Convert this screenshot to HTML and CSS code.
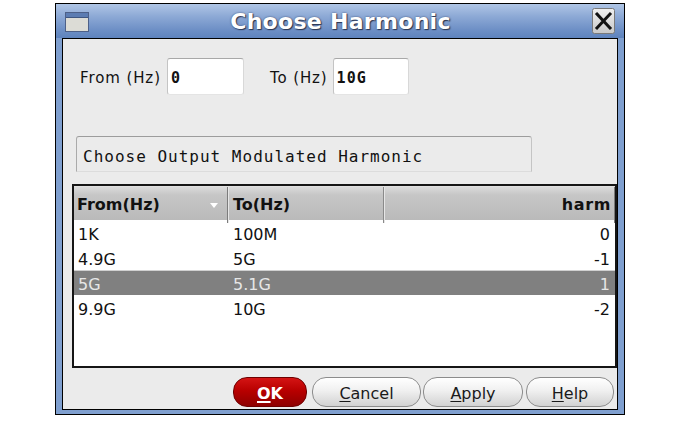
FILE: index.html
```html
<!DOCTYPE html>
<html>
<head>
<meta charset="utf-8">
<link rel="stylesheet" href="styles.css">
</head>
<body>
<div class="screen">
  <div class="window">
    <div class="titlebar">
      <span class="win-icon">
        <svg width="24" height="20" viewBox="0 0 24 20">
          <rect x="0.5" y="0.5" width="23" height="19" fill="#dcdcd6" stroke="#4d6088"/>
          <rect x="1" y="1" width="22" height="4" fill="#5c7cb2"/>
          <line x1="1" y1="5.5" x2="23" y2="5.5" stroke="#3f5680"/>
        </svg>
      </span>
      <span class="title">Choose Harmonic</span>
      <span class="close">
        <svg width="23" height="26" viewBox="0 0 23 26">
          <defs>
            <linearGradient id="cg" x1="0" y1="0" x2="0" y2="1">
              <stop offset="0" stop-color="#f0f0f0"/>
              <stop offset="1" stop-color="#c8c8c8"/>
            </linearGradient>
          </defs>
          <rect x="0.5" y="0.5" width="22" height="25" rx="2" fill="url(#cg)" stroke="#7a7a7a"/>
          <path d="M5 6 L18 20 M18 6 L5 20" stroke="#111" stroke-width="3" stroke-linecap="square"/>
        </svg>
      </span>
    </div>
    <div class="client">
      <div class="fields">
        <span class="lbl">From (Hz)</span>
        <div class="input in-from">0</div>
        <span class="lbl lbl-to">To (Hz)</span>
        <div class="input in-to">10G</div>
      </div>
      <div class="message">Choose Output Modulated Harmonic</div>
      <div class="table">
        <div class="row head">
          <div class="cell c1">From(Hz)<span class="sort"></span></div>
          <div class="cell c2">To(Hz)</div>
          <div class="cell c3">harm</div>
        </div>
        <div class="row">
          <div class="cell c1">1K</div>
          <div class="cell c2">100M</div>
          <div class="cell c3">0</div>
        </div>
        <div class="row">
          <div class="cell c1">4.9G</div>
          <div class="cell c2">5G</div>
          <div class="cell c3">-1</div>
        </div>
        <div class="row selected">
          <div class="cell c1">5G</div>
          <div class="cell c2">5.1G</div>
          <div class="cell c3">1</div>
        </div>
        <div class="row">
          <div class="cell c1">9.9G</div>
          <div class="cell c2">10G</div>
          <div class="cell c3">-2</div>
        </div>
      </div>
      <div class="buttons">
        <button class="btn btn-ok"><u>O</u>K</button>
        <button class="btn btn-cancel"><u>C</u>ancel</button>
        <button class="btn btn-apply"><u>A</u>pply</button>
        <button class="btn btn-help"><u>H</u>elp</button>
      </div>
    </div>
  </div>
</div>
</body>
</html>
```
FILE: styles.css
```css
html, body {
  margin: 0;
  padding: 0;
  background: #ffffff;
}

.screen {
  width: 683px;
  height: 422px;
  padding: 3px 0 0 55px;
  box-sizing: border-box;
  font-family: "DejaVu Sans", sans-serif;
}

.window {
  width: 570px;
  height: 412px;
  box-sizing: border-box;
  border: 1px solid #000;
  background: #7f9fcf;
  padding: 0 6px 4px 6px;
  display: flex;
  flex-direction: column;
}

.titlebar {
  height: 34px;
  margin: 0 -6px;
  padding: 0 9px;
  display: flex;
  align-items: center;
  background: linear-gradient(to bottom, #b0c6e6 0%, #8eaad6 35%, #6e90c6 75%, #5e83bd 100%);
}

.win-icon {
  width: 24px;
  height: 20px;
  display: flex;
  margin-top: 2px;
}

.title {
  flex: 1;
  text-align: center;
  color: #ffffff;
  font-weight: bold;
  font-size: 22px;
  letter-spacing: 0.3px;
  text-shadow: 1px 1px 1px #2a3550, 0 0 2px #3a4a70;
  padding-top: 1px;
}

.close {
  width: 23px;
  height: 26px;
  display: flex;
}

.client {
  flex: 1;
  border: 1px solid #000;
  background: #ebebeb;
  display: flex;
  flex-direction: column;
  padding-top: 19px;
}

.fields {
  display: flex;
  align-items: center;
  height: 37px;
  padding-left: 17px;
}

.lbl {
  font-size: 15px;
  letter-spacing: 0.9px;
  color: #111;
  margin-top: 2px;
}

.lbl-to {
  margin-left: 26px;
}

.input {
  height: 37px;
  box-sizing: border-box;
  background: #fff;
  border-top: 1px solid #a8a8a8;
  border-left: 1px solid #c4c4c4;
  border-right: 1px solid #d8d8d8;
  border-bottom: 1px solid #e4e4e4;
  border-radius: 3px;
  font-family: "DejaVu Sans Mono", monospace;
  font-weight: bold;
  font-size: 15px;
  letter-spacing: 1px;
  color: #111;
  padding: 10px 0 0 3px;
}

.in-from {
  width: 77px;
  margin-left: 6px;
}

.in-to {
  width: 76px;
  margin-left: 5px;
}

.message {
  margin: 41px 0 0 13px;
  width: 456px;
  height: 36px;
  box-sizing: border-box;
  border-top: 1px solid #9c9c9c;
  border-left: 1px solid #aaaaaa;
  border-right: 1px solid #c4c4c4;
  border-bottom: 1px solid #dcdcdc;
  border-radius: 3px 3px 0 0;
  font-family: "DejaVu Sans Mono", monospace;
  font-size: 16px;
  letter-spacing: 1px;
  color: #111;
  padding: 10px 0 0 6px;
  white-space: nowrap;
}

.table {
  margin: 12px 0 0 9px;
  height: 184px;
  box-sizing: border-box;
  border: 2px solid #151515;
  background: #fff;
  display: flex;
  flex-direction: column;
}

.row {
  display: grid;
  grid-template-columns: 154px 156px 1fr;
  height: 25px;
  font-size: 16px;
  color: #111;
}

.row .cell {
  line-height: 29px;
  white-space: nowrap;
}

.row .c1 {
  padding-left: 4px;
}

.row .c2 {
  padding-left: 5px;
}

.row .c3 {
  text-align: right;
  padding-right: 5px;
}

.row.head {
  height: 34px;
  background: linear-gradient(to bottom, #dadada 0%, #c6c6c6 25%, #bababa 100%);
  font-weight: bold;
  border-top: 1px solid #e0e0e0;
  box-sizing: border-box;
}

.row.head .cell {
  line-height: 36px;
  position: relative;
}

.row.head .c1 {
  padding-left: 3px;
  border-right: 1px solid #7c7c7c;
}

.row.head .c2 {
  border-left: 1px solid #e6e6e6;
  padding-left: 4px;
  border-right: 1px solid #8a8a8a;
}

.row.head .c3 {
  border-left: 1px solid #e6e6e6;
  border-right: 1px solid #7a7a7a;
  padding-right: 3px;
  letter-spacing: 0.6px;
}

.sort {
  position: absolute;
  left: 136px;
  top: 16px;
  width: 0;
  height: 0;
  border-left: 4px solid transparent;
  border-right: 4px solid transparent;
  border-top: 5px solid #ffffff;
}

.row.selected {
  background: #808080;
  color: #e6e6e6;
  border-top: 1px solid #d0d0d0;
  box-sizing: border-box;
}

.row.selected .cell {
  line-height: 27px;
}

.buttons {
  display: flex;
  justify-content: flex-end;
  margin-top: 9px;
  padding-right: 3px;
  height: 30px;
}

.btn {
  height: 30px;
  box-sizing: border-box;
  border-radius: 14px;
  border: 1px solid #8c8c8c;
  background: linear-gradient(to bottom, #ffffff 0%, #f0f0f0 45%, #d2d2d2 100%);
  font-family: "DejaVu Sans", sans-serif;
  font-size: 16px;
  color: #1a1a1a;
  padding: 2px 0 0 0;
  text-align: center;
}

.btn u {
  text-decoration-thickness: 1px;
  text-underline-offset: 2px;
}

.btn-ok {
  width: 74px;
  background: linear-gradient(to bottom, #d41414 0%, #b80000 45%, #8e0000 100%);
  border-color: #6e0000;
  color: #ffffff;
  font-weight: bold;
}

.btn-ok u {
  text-decoration-thickness: 2px;
}

.btn-cancel {
  width: 109px;
  margin-left: 5px;
}

.btn-apply {
  width: 100px;
  margin-left: 2px;
}

.btn-help {
  width: 88px;
  margin-left: 3px;
}
```
